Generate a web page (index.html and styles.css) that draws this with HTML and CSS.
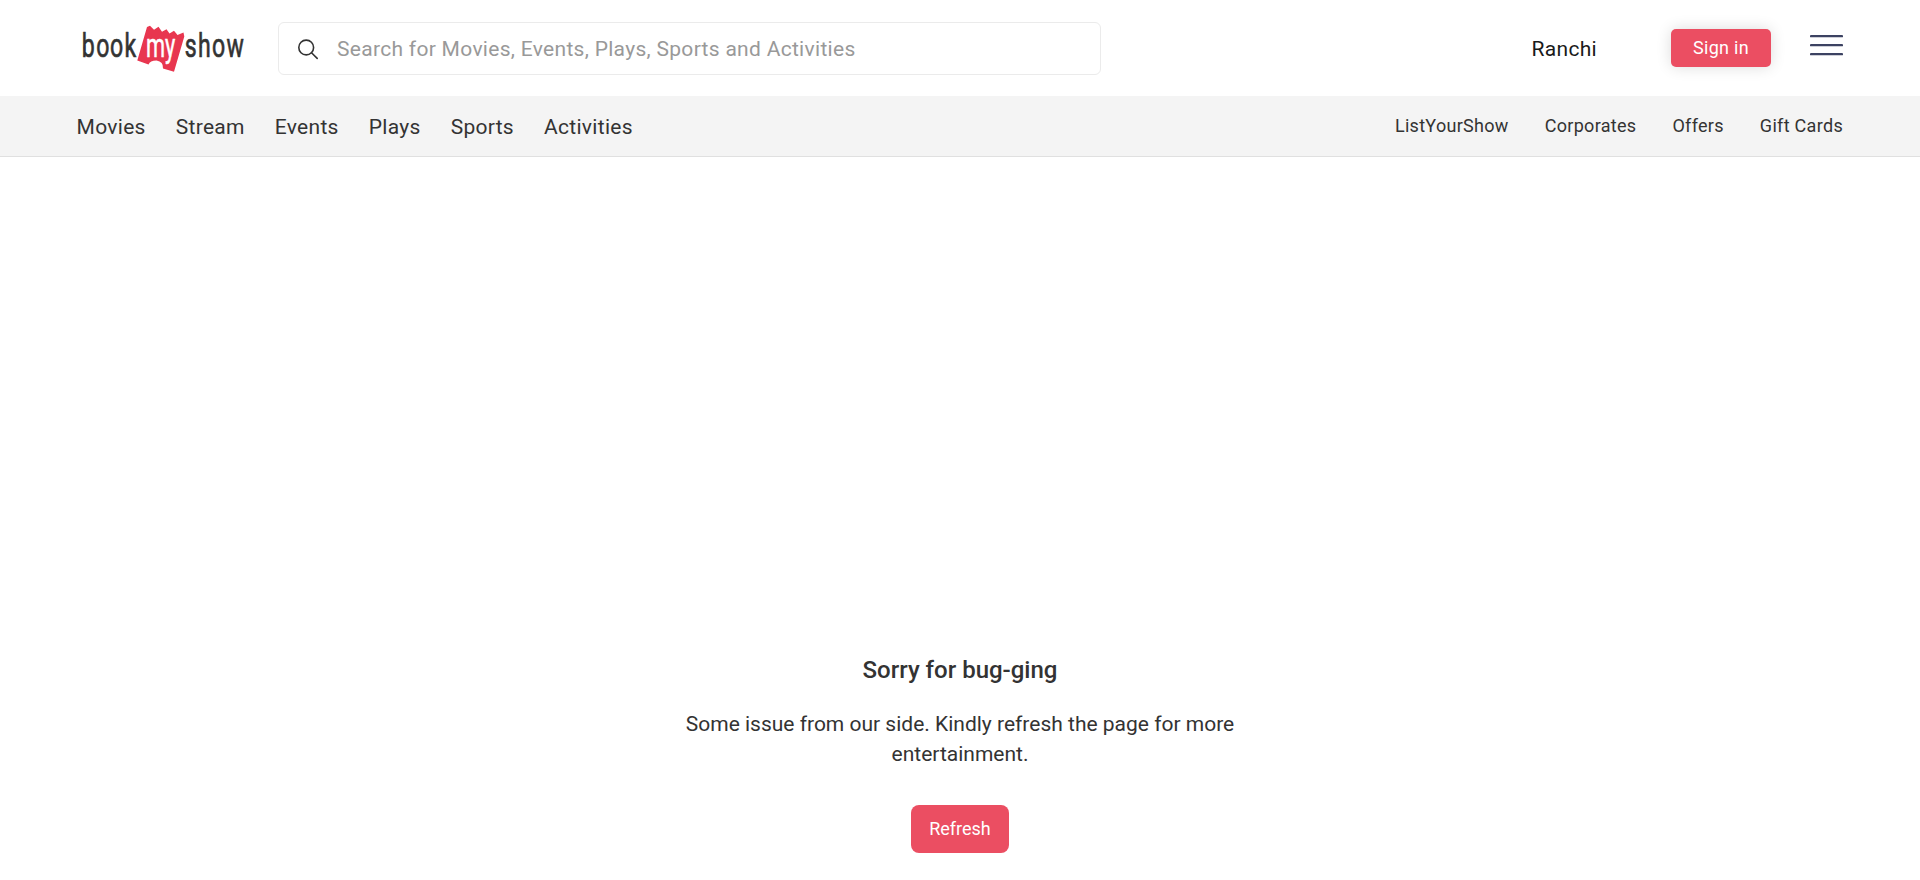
FILE: index.html
```html
<!DOCTYPE html>
<html lang="en">
<head>
<meta charset="utf-8">
<title>BookMyShow</title>
<link rel="stylesheet" href="styles.css">
</head>
<body>
<header class="header">
  <a class="logo" aria-label="bookmyshow">
    <svg width="168" height="54" viewBox="0 0 168 54">
      <path class="ticket" d="M69 0.700 L73 4.700 L77.500 1.800 L81 6.700 L85.500 4.200 L88.500 8.500 L93 5.700 L96.500 10 L102.500 7.500 L103.300 11.500 L93 46.700 L82 43.500 Q82.500 36.500 75.500 35.500 Q69 35.500 67.500 39.500 L56.300 35.500 L66 2 Z"/>
      <text class="logo-dark" transform="translate(0 32.300) scale(.68 1)" x="1.200 22.300 42.600 64">book</text>
      <text class="logo-light" transform="translate(66.300 32.300) scale(.64 1)" x="-2 27.500">my</text>
      <text class="logo-dark" transform="translate(104 32.300) scale(.68 1)" x="-.5 19 39.600 60.900">show</text>
    </svg>
  </a>
  <div class="search">
    <svg class="search-icon" width="22" height="22" viewBox="0 0 22 22"><circle cx="9.200" cy="9.500" r="7.400"/><path d="M14.500 14.800 L20.200 20.400"/></svg>
    <span>Search for Movies, Events, Plays, Sports and Activities</span>
  </div>
  <div class="actions">
    <span class="city">Ranchi</span>
    <button class="signin">Sign in</button>
    <svg class="menu" width="33" height="21" viewBox="0 0 33 21"><path d="M1 1.200H32M1 10.200H32M1 19.200H32"/></svg>
  </div>
</header>
<nav class="nav">
  <div class="nav-main"><a>Movies</a><a>Stream</a><a>Events</a><a>Plays</a><a>Sports</a><a>Activities</a></div>
  <div class="nav-side"><a>ListYourShow</a><a>Corporates</a><a>Offers</a><a>Gift Cards</a></div>
</nav>
<main class="error">
  <h1>Sorry for bug-ging</h1>
  <p>Some issue from our side. Kindly refresh the page for more entertainment.</p>
  <button class="refresh">Refresh</button>
</main>
</body>
</html>
```
FILE: styles.css
```css
* { box-sizing: border-box; }
body { margin: 0; background: #fff; color: #333; font-family: Roboto, sans-serif; overflow: hidden; }
button { border: 0; padding: 0 0 2px; background: #eb4e62; color: #fff; font-family: inherit; }
.header { height: 96px; padding: 0 77px 0 81px; display: flex; align-items: flex-start; }
.logo { width: 197px; padding-top: 25px; }
.logo svg { display: block; }
.logo text { font-family: Roboto, sans-serif; font-size: 34px; }
.ticket { fill: #e8364f; }
.logo-dark { fill: #333; stroke: #333; stroke-width: .7; stroke-linejoin: round; }
.logo-light { fill: #fff; stroke: #fff; stroke-width: .5; stroke-linejoin: round; }
.search { width: 823px; height: 53px; margin-top: 22px; padding-left: 18px; border: 1px solid #ebebeb; border-radius: 6px; display: flex; align-items: center; gap: 18px; color: #999; font-size: 21px; letter-spacing: .3px; }
.search-icon { fill: none; stroke: #333; stroke-width: 1.6; stroke-linecap: round; }
.actions { margin-left: auto; display: flex; align-items: flex-start; }
.city { margin: 36px 74px 0 0; font-size: 21px; line-height: 26px; letter-spacing: .3px; color: #1a1a1a; }
.signin { width: 100px; height: 38px; margin: 29px 39px 0 0; border-radius: 5px; font-size: 18px; letter-spacing: .3px; box-shadow: 0 0 15px rgba(0,0,0,.14); }
.menu { margin-top: 35px; fill: none; stroke: #3c4262; stroke-width: 2.3; stroke-linecap: round; }
.nav { height: 61px; padding: 0 77px 0 76.500px; background: #f4f4f4; border-bottom: 1px solid #e0e0e0; display: flex; justify-content: space-between; }
.nav-main { display: flex; gap: 30px; font-size: 21px; line-height: 62px; letter-spacing: .3px; }
.nav-side { display: flex; gap: 36px; font-size: 18px; line-height: 60px; letter-spacing: .3px; }
.error { width: 580px; margin: 0 auto; padding-top: 495px; text-align: center; }
h1 { margin: 0; font-size: 24px; line-height: 36px; font-weight: 500; }
p { margin: 21px 0 36px; font-size: 21px; line-height: 30px; }
.refresh { width: 98px; height: 48px; border-radius: 8px; font-size: 18px; }
```
